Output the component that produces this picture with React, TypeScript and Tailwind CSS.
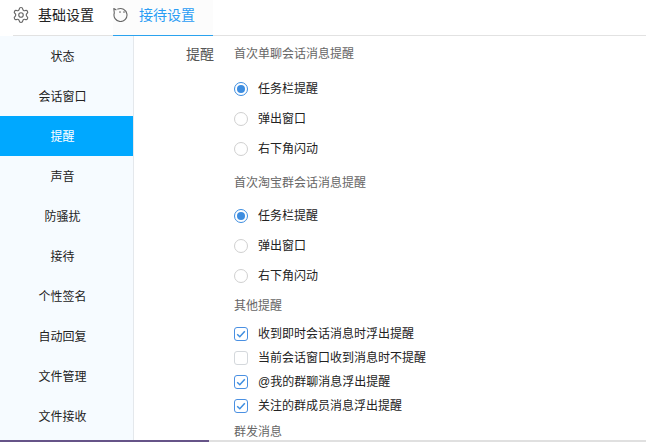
import { Settings } from "lucide-react";

const fontStack = "font-['Liberation_Sans','Noto_Sans_CJK_SC',sans-serif]";

const menuItems = ["状态", "会话窗口", "提醒", "声音", "防骚扰", "接待", "个性签名", "自动回复", "文件管理", "文件接收"];

function FaceIcon(): JSX.Element {
  return (
    <svg width="15" height="15" viewBox="0 0 15 15" fill="none" stroke="#666666" strokeWidth="1.100" strokeLinecap="round" strokeLinejoin="round">
      <path d="M4.800 2.100A6.500 6.500 0 1 1 1.300 6L.8 1.500l2.200 1.300" />
      <path d="M7 4.500v1M11 4.500v1" />
    </svg>
  );
}

function RadioOption({ label, checked }: { label: string; checked?: boolean }): JSX.Element {
  return (
    <div className="flex h-[30px] items-center">
      <span
        className={`flex h-[14px] w-[14px] items-center justify-center rounded-full bg-white ${
          checked ? "border-[1.5px] border-[#3d8de0]" : "border border-[#d0d0d0]"
        }`}
      >
        {checked && <span className="h-[8px] w-[8px] rounded-full bg-[#3d8de0]" />}
      </span>
      <span className="ml-[10px] text-xs text-[#222222]">{label}</span>
    </div>
  );
}

function CheckOption({ label, checked }: { label: string; checked?: boolean }): JSX.Element {
  return (
    <div className="flex h-6 items-center">
      <span
        className={`flex h-[14px] w-[14px] items-center justify-center rounded-[3px] border-[1.5px] bg-white ${
          checked ? "border-[#4a90e2]" : "border-[#d4d8dc]"
        }`}
      >
        {checked && (
          <svg width="10" height="10" viewBox="0 0 10 10" fill="none" stroke="#3d8de0" strokeWidth="1.500">
            <path d="M1.200 5.200l2.600 2.500 5-5.500" />
          </svg>
        )}
      </span>
      <span className="ml-[10px] text-xs text-[#222222]">{label}</span>
    </div>
  );
}

function SectionTitle({ text, className }: { text: string; className: string }): JSX.Element {
  return <div className={`text-xs leading-[16px] text-[#666666] ${className}`}>{text}</div>;
}

function RadioGroup({ className }: { className: string }): JSX.Element {
  return (
    <div className={className}>
      <RadioOption label="任务栏提醒" checked />
      <RadioOption label="弹出窗口" />
      <RadioOption label="右下角闪动" />
    </div>
  );
}

export default function App(): JSX.Element {
  return (
    <div className={`flex h-[442px] w-[646px] flex-col overflow-hidden bg-white ${fontStack}`}>
      <header className="ml-[13px] flex h-[36px] shrink-0 items-stretch border-b border-[#e2e2e2]">
        <div className="flex w-[100px] items-center pb-[6px]">
          <Settings size={18} strokeWidth={1.5} className="-ml-px text-[#666666]" />
          <span className="ml-[8px] text-sm text-[#222222]">基础设置</span>
        </div>
        <div className="-mb-px flex w-[100px] items-center border-b border-[#2aa2ee] bg-[#fcfcfc] pb-[6px]">
          <FaceIcon />
          <span className="ml-[11px] text-sm text-[#2a9df4]">接待设置</span>
        </div>
      </header>

      <div className="flex min-h-0 flex-1">
        <nav className="w-[134px] shrink-0 border-r border-[#e4e8ec] bg-[#f6fbff]">
          {menuItems.map((item) => (
            <div
              key={item}
              className={`flex h-10 items-center justify-center pt-[2px] pr-2 text-xs ${
                item === "提醒" ? "bg-[#00a8ff] text-white" : "text-[#222222]"
              }`}
            >
              {item}
            </div>
          ))}
        </nav>

        <main className="flex min-w-0 flex-1 pt-[10px]">
          <div className="w-[80px] shrink-0 text-right text-sm leading-[16px] text-[#555555]">提醒</div>
          <div className="ml-[20px] flex-1">
            <SectionTitle text="首次单聊会话消息提醒" className="" />
            <RadioGroup className="mt-[12px]" />
            <SectionTitle text="首次淘宝群会话消息提醒" className="mt-[11px]" />
            <RadioGroup className="mt-[10px]" />
            <SectionTitle text="其他提醒" className="mt-[7px]" />
            <div className="mt-[8px]">
              <CheckOption label="收到即时会话消息时浮出提醒" checked />
              <CheckOption label="当前会话窗口收到消息时不提醒" />
              <CheckOption label="@我的群聊消息浮出提醒" checked />
              <CheckOption label="关注的群成员消息浮出提醒" checked />
            </div>
            <SectionTitle text="群发消息" className="mt-[6px]" />
          </div>
        </main>
      </div>

      <div className="flex h-[2px] shrink-0">
        <div className="w-[209px] bg-[#665488]" />
        <div className="flex-1 bg-[#e0e0e0]" />
      </div>
    </div>
  );
}
